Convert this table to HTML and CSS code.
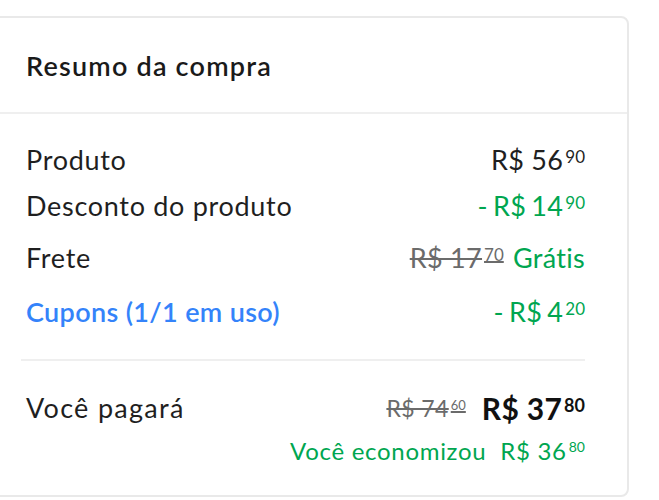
FILE: index.html
```html
<!DOCTYPE html>
<html lang="pt-BR">
<head>
<meta charset="utf-8">
<title>Resumo da compra</title>
<link rel="stylesheet" href="styles.css">
</head>
<body>
<section class="card">
  <header class="card__head">
    <h2 class="card__title">Resumo da compra</h2>
  </header>
  <div class="card__body">
    <div class="row row--a">
      <span class="label">Produto</span>
      <span class="price">R$ 56<sup class="cents">90</sup></span>
    </div>
    <div class="row row--b">
      <span class="label">Desconto do produto</span>
      <span class="price price--green">- R$ 14<sup class="cents">90</sup></span>
    </div>
    <div class="row row--c">
      <span class="label">Frete</span>
      <span class="price"><s class="old">R$ 17<sup class="cents">70</sup></s> <span class="free">Grátis</span></span>
    </div>
    <div class="row row--d">
      <span class="label label--link">Cupons (1/1 em uso)</span>
      <span class="price price--green">- R$ 4<sup class="cents">20</sup></span>
    </div>
    <hr class="divider">
    <div class="row row--total">
      <span class="label label--wide">Você pagará</span>
      <span class="total">
        <s class="old old--small">R$ 74<sup class="cents cents--xs">60</sup></s>
        <strong class="total__value">R$ 37<sup class="cents cents--bold">80</sup></strong>
      </span>
    </div>
    <div class="saving">
      <span>Você economizou</span>
      <span class="saving__value">R$ 36<sup class="cents cents--sv">80</sup></span>
    </div>
  </div>
</section>
</body>
</html>
```

FILE: styles.css
```css
* { box-sizing: border-box; }
html, body { margin: 0; padding: 0; background: #ffffff; }
body {
  font-family: Lato, "Noto Sans", sans-serif;
  color: #1f1f1f;
  width: 659px;
  height: 500px;
  overflow: hidden;
}
.card {
  margin: 16px 0 0 -12px;
  width: 641px;
  height: 481px;
  border: 2px solid #e9e9e9;
  border-radius: 8px;
  background: #fff;
}
.card__head {
  height: 96px;
  border-bottom: 2px solid #efefef;
  padding: 33px 0 0 36px;
}
.card__title {
  margin: 0;
  font-size: 27px;
  line-height: 30px;
  font-weight: 600;
  letter-spacing: 1.2px;
  color: #1a1a1a;
}
.card__body {
  padding: 30px 42px 0 36px;
}
.row {
  display: flex;
  justify-content: space-between;
  align-items: center;
  height: 32px;
}
.row--a { margin-bottom: 14px; }
.row--b { margin-bottom: 20px; }
.row--c { margin-bottom: 22px; }
.label {
  font-size: 27px;
  line-height: 32px;
  letter-spacing: 0.7px;
  color: #1f1f1f;
}
.label--wide { letter-spacing: 1.3px; }
.label--link {
  color: #3483fa;
  font-weight: 600;
  letter-spacing: 0.35px;
}
.price {
  font-size: 27px;
  line-height: 32px;
  letter-spacing: 0.3px;
  color: #1f1f1f;
  white-space: nowrap;
}
.price--green { color: #00a650; word-spacing: -2px; }
.cents {
  font-size: 17px;
  vertical-align: baseline;
  position: relative;
  top: -7px;
  margin-left: 2px;
  line-height: 1;
  letter-spacing: 0;
}
.old {
  color: #6b6b6b;
  text-decoration: line-through;
  text-decoration-thickness: 2px;
}
.free { color: #00a650; margin-left: 2px; word-spacing: 0; }
.divider {
  border: 0;
  border-top: 2px solid #efefef;
  margin: 31px 0 31px -5px;
}
.total {
  display: flex;
  align-items: center;
  gap: 16px;
  white-space: nowrap;
}
.old--small { font-size: 23px; line-height: 32px; letter-spacing: 0.4px; }
.cents--xs { font-size: 13px; top: -7px; }
.total__value {
  font-size: 30px;
  font-weight: 700;
  line-height: 32px;
  letter-spacing: 0.3px;
  color: #111;
}
.cents--bold { font-size: 18px; font-weight: 700; top: -8px; }
.saving {
  margin-top: 12px;
  display: flex;
  justify-content: flex-end;
  gap: 14px;
  font-size: 24px;
  line-height: 30px;
  letter-spacing: 0.7px;
  color: #00a650;
}
.cents--sv { font-size: 14px; top: -8px; }
```
